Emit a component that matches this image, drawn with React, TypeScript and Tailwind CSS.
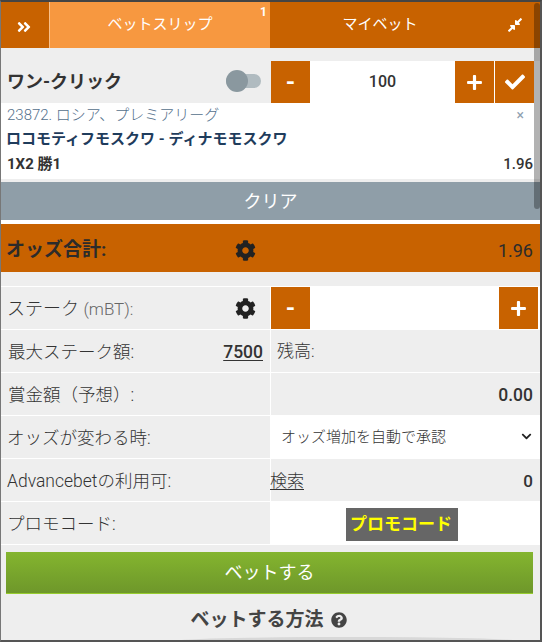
import { FaAngleDoubleRight, FaCheck, FaChevronDown, FaCog, FaCompressAlt, FaPlus, FaQuestionCircle } from "react-icons/fa";
import type { ReactNode } from "react";

const font = "font-['Roboto','Noto_Sans_CJK_JP',sans-serif]";

function StepButton({ children, className = "" }: { children: ReactNode; className?: string }) {
    return (
        <div className={`w-[39px] shrink-0 h-full bg-[#c86200] text-white flex items-center justify-center ${className}`}>
            {children}
        </div>
    );
}

function Row({ left, right, rightClass = "bg-[#eeeeee]" }: { left: ReactNode; right: ReactNode; rightClass?: string }) {
    return (
        <div className="h-[43px] flex shrink-0 border-b-[1px] border-white">
            <div className="w-[269px] shrink-0 bg-[#eeeeee] flex items-center justify-between pl-[7px] pr-[7px] text-[17.5px] font-light text-[#333]">
                {left}
            </div>
            <div className="w-px bg-white shrink-0" />
            <div className={`flex-1 flex items-center ${rightClass}`}>{right}</div>
        </div>
    );
}

export default function App() {
    return (
        <div className={`${font} relative w-[542px] h-[642px] overflow-hidden bg-[#eeeeee] border-l border-r-2 border-r-[#555] border-l-[#777] border-t-2 border-t-[#444] border-b-2 border-b-[#555] flex flex-col`}>
            {/* Tabs */}
            <div className="h-[46px] shrink-0 flex bg-[#c86200] text-white text-[15px]">
                <div className="w-[48px] flex items-center justify-center pt-[3px] pr-[2px]">
                    <FaAngleDoubleRight className="w-[16px] h-[16px]" />
                </div>
                <div className="relative w-[221px] bg-[#f79840] flex items-center justify-center pb-[2px] border-l border-[#f9c08a]">
                    ベットスリップ
                    <span className="absolute top-[1px] right-[3px] text-[12px] font-bold">1</span>
                </div>
                <div className="flex-1 flex items-center justify-center pb-[2px] pl-[5px] pr-[55px]">マイベット</div>
                <div className="absolute top-[15px] left-[506px]">
                    <FaCompressAlt className="w-[16px] h-[16px]" />
                </div>
            </div>

            {/* One click */}
            <div className="h-[55px] shrink-0 flex">
                <div className="w-[269px] shrink-0 flex items-end justify-between pl-[6px] pr-[9px] pb-[9px]">
                    <span className="text-[18px] font-bold text-[#333] leading-[24px]">ワン-クリック</span>
                    <div className="relative w-[35px] h-[14px] rounded-full bg-[#b0bbc0] mb-[6px]">
                        <div className="absolute left-0 top-[-4px] w-[22px] h-[22px] rounded-full bg-[#8a989f]" />
                    </div>
                </div>
                <div className="w-px shrink-0" />
                <div className="flex-1 flex mt-[13px] h-[42px] bg-white">
                    <StepButton><span className="text-[24px] font-bold leading-none">-</span></StepButton>
                    <div className="flex-1 flex items-center justify-center text-[16px] font-medium text-[#333]">100</div>
                    <StepButton><FaPlus className="w-[17px] h-[17px]" /></StepButton>
                    <div className="w-px shrink-0" />
                    <StepButton><FaCheck className="w-[20px] h-[20px]" /></StepButton>
                    <div className="w-[6px] shrink-0 bg-white" />
                </div>
            </div>

            {/* Slip */}
            <div className="relative h-[76px] shrink-0 bg-white pl-[6px] pr-[7px] flex flex-col">
                <div className="text-[15px] font-light text-[#54708c] leading-[20px] pt-[2px] h-[23px]">23872. ロシア、プレミアリーグ</div>
                <div className="-ml-px text-[15px] font-bold text-[#1f3c5c] leading-[22px] h-[25px] pt-[2px]">ロコモティフモスクワ - ディナモモスクワ</div>
                <div className="flex justify-between text-[15px] font-bold text-[#333] leading-[20px] pt-[3px]">
                    <span>1X2 勝1</span>
                    <span className="font-medium">1.96</span>
                </div>
                <span className="absolute top-[3px] right-[16px] text-[14px] leading-[18px] text-[#8fa0b0]">×</span>
            </div>

            <div className="h-[3px] shrink-0" />

            {/* Clear */}
            <div className="h-[38px] shrink-0 bg-[#8f9ea8] text-white text-[18px] flex items-center justify-center">クリア</div>
            <div className="h-[4px] shrink-0 bg-white" />

            {/* Total odds */}
            <div className="h-[48px] shrink-0 bg-[#c86200] flex items-center pl-[5px] pr-[7px] pt-[5px] text-[#2b2b2b]">
                <span className="w-[229px] text-[19px] font-bold">オッズ合計:</span>
                <FaCog className="w-[21px] h-[21px] text-[#222]" />
                <span className="ml-auto text-[18px]">1.96</span>
            </div>

            <div className="h-[14px] shrink-0" />
            <div className="h-px shrink-0 bg-white" />

            {/* Stake */}
            <Row
                left={
                    <>
                        <span className="text-[18px] -ml-px pt-[2px]">ステーク <span className="text-[17px] text-[#666]">(mBT):</span></span>
                        <FaCog className="w-[21px] h-[21px] text-[#222] mr-[7px]" />
                    </>
                }
                rightClass="bg-white"
                right={
                    <div className="flex h-[42px] w-full">
                        <StepButton><span className="text-[24px] font-bold leading-none">-</span></StepButton>
                        <div className="flex-1" />
                        <StepButton><FaPlus className="w-[17px] h-[17px]" /></StepButton>
                        <div className="w-[2px] shrink-0" />
                    </div>
                }
            />
            <Row
                left={
                    <>
                        <span className="pt-[2px]">最大ステーク額:</span>
                        <span className="font-medium text-[17.5px] underline underline-offset-2 text-[#333] pt-[2px]">7500</span>
                    </>
                }
                right={<span className="pl-[6px] pt-[2px] text-[17px] font-light text-[#333]">残高:</span>}
            />
            <Row
                left={<span className="pt-[2px]">賞金額（予想）:</span>}
                right={<span className="ml-auto pr-[7px] pt-[3px] text-[17.5px] font-medium text-[#333]">0.00</span>}
            />
            <Row
                left={<span className="-ml-px pt-[2px]">オッズが変わる時:</span>}
                rightClass="bg-white"
                right={
                    <div className="relative w-full h-full flex items-center pl-[10px] text-[15px] font-light text-[#333]">
                        オッズ増加を自動で承認
                        <FaChevronDown className="absolute right-[8px] top-[15px] w-[11px] h-[11px] text-[#222]" />
                    </div>
                }
            />
            <Row
                left={<span className="-ml-px pt-[2px]">Advancebetの利用可:</span>}
                right={
                    <div className="w-full flex justify-between pr-[7px] pt-[3px] text-[17px] text-[#333]">
                        <span className="underline underline-offset-2 font-light -ml-px">検索</span>
                        <span className="font-medium">0</span>
                    </div>
                }
            />
            <Row
                left={<span className="-ml-px pt-[2px]">プロモコード:</span>}
                rightClass="bg-white"
                right={
                    <div className="mx-auto mr-[82px] mt-[3px] w-[112px] h-[33px] bg-[#666] text-[#ffff00] text-[17px] font-bold flex items-center justify-center pr-[2px]">
                        プロモコード
                    </div>
                }
            />

            {/* Place bet */}
            <div className="mt-[7px] mx-[5px] w-[527px] h-[42px] shrink-0 bg-gradient-to-b from-[#84b52f] to-[#6e972a] border-b border-[#96cc2e] text-white text-[18px] flex items-center justify-center">
                ベットする
            </div>
            <div className="flex items-center justify-center gap-[7px] mt-[13px] text-[19px] leading-[26px] font-bold text-[#444] pr-[4px]">
                ベットする方法
                <FaQuestionCircle className="w-[16px] h-[16px]" />
            </div>

            {/* Overlays */}
            <div className="absolute bottom-[-6px] left-[170px] w-[352px] h-[9px] rounded-t-[50%] bg-[#d8d8d8]" />
            <div className="absolute top-[1px] left-[533px] w-[6px] h-[206px] rounded-[4px] bg-black/30" />
        </div>
    );
}
